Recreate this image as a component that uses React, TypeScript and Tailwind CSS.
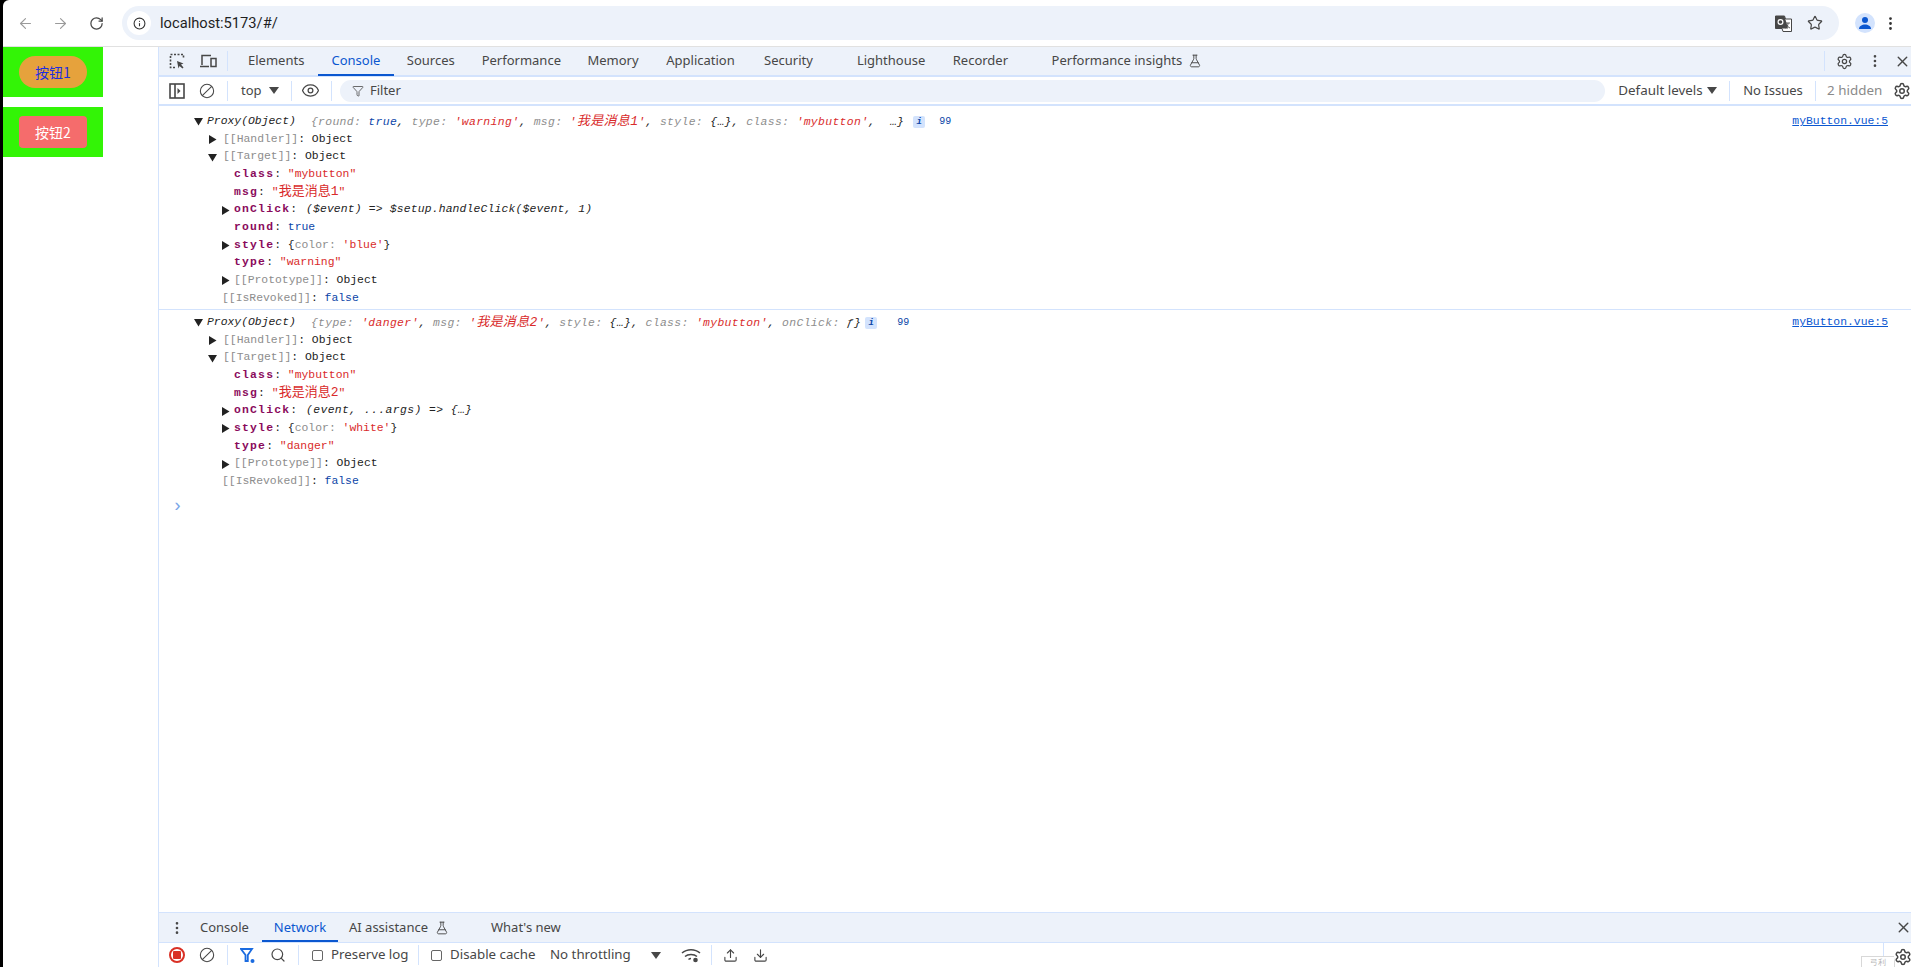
import React from "react";
import { ArrowLeft, ArrowRight, RotateCw, Info, Star, EllipsisVertical, X, Settings, Ban, Eye, Search, Upload, Download, FlaskConical, Filter } from "lucide-react";

const sans = "font-['Noto_Sans',sans-serif]";
const Tri = ({ open, cls }: { open?: boolean; cls: string }) => (
  <svg width="9" height="9" viewBox="0 0 9 9" className={"shrink-0 " + cls}>
    {open ? <polygon points="0,1 9,1 4.5,8.5" fill="#222" /> : <polygon points="1,0 8.5,4.5 1,9" fill="#222" />}
  </svg>
);
const Div = ({ cls }: { cls: string }) => <div className={"w-px h-[20px] bg-[#d3e3fd] shrink-0 " + cls} />;

const K = ({ children }: { children: React.ReactNode }) => <span className="text-[#8d8d8d]">{children}</span>;
const S = ({ children }: { children: React.ReactNode }) => <span className="text-[#d92b2b]">{children}</span>;
const B = ({ children }: { children: React.ReactNode }) => <span className="text-[#0b46a8]">{children}</span>;
const P = ({ children }: { children: React.ReactNode }) => <span className="font-bold text-[#8a0a5c] tracking-[1.2px]">{children}</span>;
const C = ({ children }: { children: React.ReactNode }) => <span className="text-[13px]">{children}</span>;

const Row = ({ cls, children }: { cls: string; children: React.ReactNode }) => (
  <div className={"h-[17.67px] leading-[17.67px] flex items-center whitespace-pre " + cls}>{children}</div>
);

const Inspect = () => (
  <svg width="18" height="18" viewBox="0 0 18 18" fill="none" stroke="#474747" strokeWidth="1.6">
    <path d="M7 15.5H2.5V2.5h13V7" strokeDasharray="2 1.5" />
    <path d="M9 9l6.5 2.5-2.5 1 2.5 3-1 1-3-2.5-1 2.5z" fill="#474747" stroke="none" />
  </svg>
);
const Device = () => (
  <svg width="18" height="18" viewBox="0 0 18 18" fill="none" stroke="#474747" strokeWidth="1.5">
    <path d="M3 13V3.500h9M1 14.500h9" />
    <rect x="12" y="6.500" width="5" height="8" />
  </svg>
);
const Panel = () => (
  <svg width="16" height="16" viewBox="0 0 16 16" fill="none" stroke="#474747" strokeWidth="1.6">
    <rect x="1" y="1" width="14" height="14" />
    <path d="M6 1v14" />
    <path d="M8.500 5l3 3-3 3z" fill="#474747" stroke="none" />
  </svg>
);
const Caret = ({ cls }: { cls: string }) => (
  <svg width="10" height="7" viewBox="0 0 10 7" className={"shrink-0 " + cls}><polygon points="0,0 10,0 5,7" fill="#474747" /></svg>
);
const Translate = () => (
  <svg width="17" height="17" viewBox="0 0 17 17">
    <path d="M0.500 1h9l1 3h6v12.500H8l-1-3H0.500z" fill="#fff" stroke="#474747" />
    <path d="M0.500 1h9l3.500 12.500H0.500z" fill="#474747" />
    <circle cx="5.500" cy="7" r="2.400" fill="none" stroke="#fff" strokeWidth="1.2" />
    <path d="M11 8h4M13 8c0 3-1 4-2.500 5M11.500 9.500c.7 1.500 1.700 2.700 3.500 3.500" fill="none" stroke="#474747" strokeWidth="0.9" />
  </svg>
);
const Avatar = () => (
  <div className="w-[20px] h-[20px] rounded-full bg-[#d3e3fd] flex items-center justify-center shrink-0">
    <svg width="14" height="14" viewBox="0 0 14 14" fill="#0b57d0"><circle cx="7" cy="4" r="3" /><path d="M1 13c0-3 3-4.500 6-4.500s6 1.500 6 4.500z" /></svg>
  </div>
);
const Wifi = () => (
  <svg width="20" height="17" viewBox="0 0 20 17" fill="none" stroke="#474747" strokeWidth="1.5">
    <path d="M1 6c5-4.500 13-4.500 18 0M4 9.500c3-2.700 9-2.700 12 0M7.500 12.500c.7-.6 1.500-1 2.500-1" />
    <circle cx="14.500" cy="13" r="2.300" fill="#474747" stroke="none" />
  </svg>
);
const FunnelDot = () => (
  <svg width="16" height="17" viewBox="0 0 16 17">
    <path d="M1 2h11L7.800 8v6H5.500V8z" fill="none" stroke="#1a6be0" strokeWidth="1.800" />
    <circle cx="12.500" cy="14" r="2" fill="#1a6be0" />
  </svg>
);
const Check = ({ cls }: { cls: string }) => <div className={"w-[11px] h-[11px] rounded-[2px] border border-[#666] shrink-0 " + cls} />;

export default function App() {
  return (
    <div className={"w-[1911px] h-[967px] overflow-hidden bg-black flex " + sans}>
      <div className="w-[3px] shrink-0" />
      <div className="w-[1908px] flex flex-col bg-white rounded-tl-[6px] relative">
        <header className="h-[47px] shrink-0 border-b border-[#e1e1e1] flex items-center">
          <ArrowLeft size={17} strokeWidth={1.6} className="ml-[14px] text-[#9a9a9a]" />
          <ArrowRight size={17} strokeWidth={1.6} className="ml-[18px] text-[#9a9a9a]" />
          <RotateCw size={15} strokeWidth={2} className="ml-[20px] text-[#474747]" />
          <div className="ml-[18px] w-[1717px] h-[34px] rounded-full bg-[#edf2fa] flex items-center">
            <div className="ml-[5px] w-[24px] h-[24px] rounded-full bg-white flex items-center justify-center">
              <Info size={13} strokeWidth={2} className="text-[#333]" />
            </div>
            <span className="ml-[9px] text-[14.7px] text-[#1f1f1f] font-['Roboto',sans-serif]">localhost:5173/#/</span>
            <div className="ml-auto mr-[16px] flex items-center gap-[15px]">
              <Translate />
              <Star size={16} strokeWidth={1.8} className="text-[#474747]" />
            </div>
          </div>
          <div className="ml-[16px]"><Avatar /></div>
          <EllipsisVertical size={17} className="ml-[7px] text-[#333]" />
        </header>

        <div className="flex-1 flex min-h-0">
          <aside className="w-[155px] shrink-0 flex flex-col">
            <div className="w-[100px] h-[50px] bg-[#33f406] flex items-center">
              <button className="ml-[16px] w-[68px] h-[32px] rounded-full bg-[#e6a23c] text-[#1d2fe0] text-[14px] font-['Noto_Sans_CJK_SC',sans-serif]">按钮1</button>
            </div>
            <div className="w-[100px] h-[50px] mt-[10px] bg-[#33f406] flex items-center">
              <button className="ml-[16px] w-[68px] h-[32px] rounded-[4px] bg-[#f56c6c] text-white text-[14px] font-['Noto_Sans_CJK_SC',sans-serif]">按钮2</button>
            </div>
          </aside>

          <main className="flex-1 min-w-0 flex flex-col border-l border-[#d3e3fd]">
            <nav className="h-[30px] shrink-0 bg-[#edf2fa] border-b-2 border-[#d3e3fd] flex items-center text-[13px] text-[#474747]">
              <div className="ml-[9px]"><Inspect /></div>
              <div className="ml-[13px]"><Device /></div>
              <Div cls="ml-[10px]" />
              <span className="ml-[20px] w-[56px]">Elements</span>
              <div className="ml-[14px] w-[76px] h-[28px] relative flex items-center justify-center text-[#0b57d0]">Console<div className="absolute bottom-[-1px] left-0 right-0 h-[2px] bg-[#0b57d0]" /></div>
              <span className="ml-[13px] w-[50px]">Sources</span>
              <span className="ml-[25px] w-[80px]">Performance</span>
              <span className="ml-[26px] w-[54px]">Memory</span>
              <span className="ml-[25px] w-[72px]">Application</span>
              <span className="ml-[26px] w-[52px]">Security</span>
              <span className="ml-[41px] w-[70px]">Lighthouse</span>
              <span className="ml-[26px] w-[56px]">Recorder</span>
              <span className="ml-[43px] w-[136px]">Performance insights</span>
              <FlaskConical size={14} strokeWidth={1.6} className="ml-[1px]" />
              <Div cls="ml-[622px]" />
              <Settings size={17} strokeWidth={1.8} className="ml-[11px]" />
              <EllipsisVertical size={16} className="ml-[14px]" />
              <X size={17} strokeWidth={2} className="ml-[11px]" />
            </nav>

            <div className="h-[29px] shrink-0 border-b-2 border-[#d3e3fd] flex items-center text-[13px] text-[#474747]">
              <div className="ml-[10px]"><Panel /></div>
              <Ban size={16} strokeWidth={1.6} className="ml-[14px] -scale-x-100" />
              <Div cls="ml-[12px]" />
              <span className="ml-[13px] w-[25px]">top</span>
              <Caret cls="ml-[3px]" />
              <Div cls="ml-[12px]" />
              <Eye size={19} strokeWidth={1.6} className="ml-[9px]" />
              <Div cls="ml-[11px]" />
              <div className="ml-[8px] w-[1267px] h-[22px] rounded-full bg-[#edf2fa] flex items-center">
                <Filter size={12} strokeWidth={1.6} className="ml-[12px]" />
                <span className="ml-[6px]">Filter</span>
              </div>
              <span className="ml-[13px] w-[88px] text-[13.4px]">Default levels</span>
              <Caret cls="ml-[1px]" />
              <Div cls="ml-[12px]" />
              <span className="ml-[13px] w-[61px]">No Issues</span>
              <Div cls="ml-[11px]" />
              <span className="ml-[11px] w-[56px] text-[13.4px] text-[#8a8a8a]">2 hidden</span>
              <Settings size={18} strokeWidth={2} className="ml-[10px] shrink-0" />
            </div>

            <section className="flex-1 min-h-0 pt-[7px] text-[11.4px] text-[#222] font-['Liberation_Mono','Noto_Sans_CJK_SC',monospace]">
              <div className="h-[196px] relative">
                <Row cls="pl-[35px]">
                  <Tri open cls="mr-[4px]" />
                  <i>Proxy(Object)</i>
                  <i className="ml-[15px] tracking-[0.35px]"><K>{"{round: "}</K><B>true</B>, <K>type: </K><S>'warning'</S>, <K>msg: </K><S>'<C>我是消息1</C>'</S>, <K>style: </K>{"{…}"}, <K>class: </K><S>'mybutton'</S>,  {"…}"}</i>
                  <span className="ml-[9px] w-[12px] h-[12px] rounded-[2px] bg-[#d3e3fd] text-[#0b46a8] text-[9px] leading-[12px] text-center italic font-bold">i</span>
                  <span className="ml-[14px] text-[#0b46a8] text-[10px]">99</span>
                  <a className="absolute right-[23px] top-0 text-[#0b57d0] underline">myButton.vue:5</a>
                </Row>
                <Row cls="pl-[49px]"><Tri cls="mr-[6px]" /><K>[[Handler]]</K>: Object</Row>
                <Row cls="pl-[49px]"><Tri open cls="mr-[6px]" /><K>[[Target]]</K>: Object</Row>
                <Row cls="pl-[75px]"><P>class</P>: <S>"mybutton"</S></Row>
                <Row cls="pl-[75px]"><P>msg</P>: <S>"<C>我是消息1</C>"</S></Row>
                <Row cls="pl-[62px]"><Tri cls="mr-[4px]" /><P>onClick</P>: <i className="ml-[2px] tracking-[0.15px]">($event) =&gt; $setup.handleClick($event, 1)</i></Row>
                <Row cls="pl-[75px]"><P>round</P>: <B>true</B></Row>
                <Row cls="pl-[62px]"><Tri cls="mr-[4px]" /><P>style</P>: {"{"}<K>color: </K><S>'blue'</S>{"}"}</Row>
                <Row cls="pl-[75px]"><P>type</P>: <S>"warning"</S></Row>
                <Row cls="pl-[62px]"><Tri cls="mr-[4px]" /><K>[[Prototype]]</K>: Object</Row>
                <Row cls="pl-[63px]"><K>[[IsRevoked]]</K>: <B>false</B></Row>
              </div>
              <div className="h-px bg-[#d3e3fd] mb-[4px]" />
              <div className="relative">
                <Row cls="pl-[35px]">
                  <Tri open cls="mr-[4px]" />
                  <i>Proxy(Object)</i>
                  <i className="ml-[15px] tracking-[0.35px]"><K>{"{type: "}</K><S>'danger'</S>, <K>msg: </K><S>'<C>我是消息2</C>'</S>, <K>style: </K>{"{…}"}, <K>class: </K><S>'mybutton'</S>, <K>onClick: </K>{"ƒ}"}</i>
                  <span className="ml-[4px] w-[12px] h-[12px] rounded-[2px] bg-[#d3e3fd] text-[#0b46a8] text-[9px] leading-[12px] text-center italic font-bold">i</span>
                  <span className="ml-[20px] text-[#0b46a8] text-[10px]">99</span>
                  <a className="absolute right-[23px] top-0 text-[#0b57d0] underline">myButton.vue:5</a>
                </Row>
                <Row cls="pl-[49px]"><Tri cls="mr-[6px]" /><K>[[Handler]]</K>: Object</Row>
                <Row cls="pl-[49px]"><Tri open cls="mr-[6px]" /><K>[[Target]]</K>: Object</Row>
                <Row cls="pl-[75px]"><P>class</P>: <S>"mybutton"</S></Row>
                <Row cls="pl-[75px]"><P>msg</P>: <S>"<C>我是消息2</C>"</S></Row>
                <Row cls="pl-[62px]"><Tri cls="mr-[4px]" /><P>onClick</P>: <i className="ml-[2px] tracking-[0.4px]">(event, ...args) =&gt; {"{…}"}</i></Row>
                <Row cls="pl-[62px]"><Tri cls="mr-[4px]" /><P>style</P>: {"{"}<K>color: </K><S>'white'</S>{"}"}</Row>
                <Row cls="pl-[75px]"><P>type</P>: <S>"danger"</S></Row>
                <Row cls="pl-[62px]"><Tri cls="mr-[4px]" /><K>[[Prototype]]</K>: Object</Row>
                <Row cls="pl-[63px]"><K>[[IsRevoked]]</K>: <B>false</B></Row>
              </div>
              <div className="ml-[13px] mt-[7px] text-[#7aa7e8] text-[18px] leading-[17px]">›</div>
            </section>

            <nav className="h-[31px] shrink-0 bg-[#edf2fa] border-y border-[#d3e3fd] flex items-center text-[13px] text-[#474747]">
              <EllipsisVertical size={16} className="ml-[10px]" />
              <span className="ml-[15px] w-[52px]">Console</span>
              <div className="ml-[10px] w-[76px] h-[29px] relative flex items-center justify-center text-[#0b57d0]">Network<div className="absolute bottom-0 left-0 right-0 h-[2px] bg-[#0b57d0]" /></div>
              <span className="ml-[11px] w-[82px]">AI assistance</span>
              <FlaskConical size={14} strokeWidth={1.6} className="ml-[4px]" />
              <span className="ml-[42px] w-[74px]">What's new</span>
              <X size={17} strokeWidth={2} className="ml-auto mr-[-1px]" />
            </nav>

            <div className="h-[24px] shrink-0 flex items-center text-[13.3px] text-[#474747] relative">
              <div className="ml-[10px] w-[16px] h-[16px] rounded-full border-2 border-[#d93025] flex items-center justify-center shrink-0"><div className="w-[8px] h-[8px] bg-[#d93025] rounded-[1px]" /></div>
              <Ban size={16} strokeWidth={1.6} className="ml-[14px] -scale-x-100" />
              <Div cls="ml-[12px]" />
              <div className="ml-[12px]"><FunnelDot /></div>
              <Search size={16} strokeWidth={1.8} className="ml-[14px]" />
              <Div cls="ml-[12px]" />
              <Check cls="ml-[13px]" />
              <span className="ml-[8px] w-[78px]">Preserve log</span>
              <Div cls="ml-[9px]" />
              <Check cls="ml-[12px]" />
              <span className="ml-[8px] w-[88px]">Disable cache</span>
              <span className="ml-[12px] w-[86px]">No throttling</span>
              <Caret cls="ml-[15px]" />
              <div className="ml-[20px]"><Wifi /></div>
              <Div cls="ml-[10px]" />
              <Upload size={15} strokeWidth={1.8} className="ml-[11px]" />
              <Download size={15} strokeWidth={1.8} className="ml-[15px]" />
              <div className="absolute right-[16px] top-[13px] w-[34px] h-[12px] border border-[#d8d8d8] bg-white text-[8px] leading-[10px] text-[#b5b5b5] text-center overflow-hidden">弓利</div>
              <div className="absolute right-[27px] top-0 h-[13px] w-px bg-[#d3e3fd]" />
              <Settings size={18} strokeWidth={2} className="absolute right-[-1px] top-[5px] bg-white rounded-full" />
            </div>
          </main>
        </div>
      </div>
    </div>
  );
}
